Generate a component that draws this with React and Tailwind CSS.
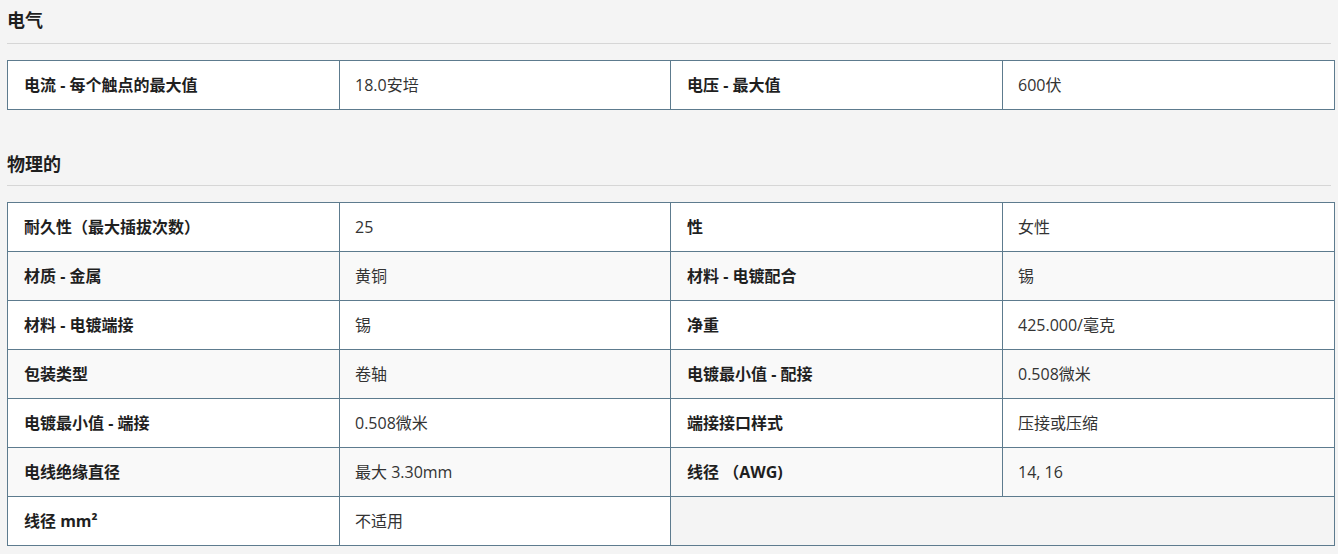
import React from "react";

const font = { fontFamily: '"Open Sans", "Noto Sans CJK SC", sans-serif' };

function Row({ cells, bg }) {
  return (
    <tr className={bg}>
      {cells.map((c, i) =>
        c.empty ? (
          <td key={i} colSpan={c.span} className="border border-[#5d7b8e] bg-[#f4f4f4] h-[49px]"></td>
        ) : (
          <td
            key={i}
            className={
              "border border-[#5d7b8e] h-[49px] align-middle " +
              (i % 2 === 0
                ? "pl-[16px] font-bold text-[#1f1f1f]"
                : "pl-[15px] text-[#333333]")
            }
          >
            {c}
          </td>
        )
      )}
    </tr>
  );
}

function Section({ title, rows, first }) {
  return (
    <div className={first ? "" : "mt-[32px]"}>
      <div className={(first ? "pt-[8px] pb-[11px]" : "pt-[10px] pb-[9px]") + " border-b border-[#d6d6d6]"}>
        <h2 className="text-[18px] leading-6 font-bold text-[#1f1f1f]">{title}</h2>
      </div>
      <table className="mt-[16px] w-[1327px] table-fixed border-collapse text-[16px] leading-6">
        <colgroup>
          <col className="w-[332px]" />
          <col className="w-[331px]" />
          <col className="w-[332px]" />
          <col className="w-[332px]" />
        </colgroup>
        <tbody>
          {rows.map((r, i) => (
            <Row key={i} cells={r} bg={i % 2 === 0 ? "bg-white" : "bg-[#f9f9f9]"} />
          ))}
        </tbody>
      </table>
    </div>
  );
}

export default function App() {
  const elec = [["电流 - 每个触点的最大值", "18.0安培", "电压 - 最大值", "600伏"]];
  const phys = [
    ["耐久性（最大插拔次数）", "25", "性", "女性"],
    ["材质 - 金属", "黄铜", "材料 - 电镀配合", "锡"],
    ["材料 - 电镀端接", "锡", "净重", "425.000/毫克"],
    ["包装类型", "卷轴", "电镀最小值 - 配接", "0.508微米"],
    ["电镀最小值 - 端接", "0.508微米", "端接接口样式", "压接或压缩"],
    ["电线绝缘直径", "最大 3.30mm", "线径 （AWG)", "14, 16"],
    ["线径 mm²", "不适用", { empty: true, span: 2 }],
  ];
  return (
    <div className="min-h-[554px] bg-[#f4f4f4] px-[7px]" style={font}>
      <Section title="电气" rows={elec} first />
      <Section title="物理的" rows={phys} />
    </div>
  );
}
